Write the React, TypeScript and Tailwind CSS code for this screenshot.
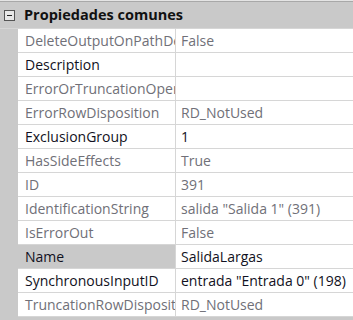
import React from 'react';

type Prop = { name: string; value: string; editable?: boolean; selected?: boolean };

const props: Prop[] = [
  { name: 'DeleteOutputOnPathDetached', value: 'False' },
  { name: 'Description', value: '', editable: true },
  { name: 'ErrorOrTruncationOperation', value: '' },
  { name: 'ErrorRowDisposition', value: 'RD_NotUsed' },
  { name: 'ExclusionGroup', value: '1', editable: true },
  { name: 'HasSideEffects', value: 'True' },
  { name: 'ID', value: '391' },
  { name: 'IdentificationString', value: 'salida "Salida 1" (391)' },
  { name: 'IsErrorOut', value: 'False' },
  { name: 'Name', value: 'SalidaLargas', editable: true, selected: true },
  { name: 'SynchronousInputID', value: 'entrada "Entrada 0" (198)', editable: true },
  { name: 'TruncationRowDisposition', value: 'RD_NotUsed' },
];

export default function App() {
  return (
    <div
      className="w-[353px] h-[320px] overflow-hidden bg-[#c9c9c9] text-[14px] leading-none"
      style={{ fontFamily: '"Open Sans", "Noto Sans", sans-serif' }}
    >
      <div className="h-[1px] bg-[#e4e4e4]" />
      <div className="h-[1px] bg-[#a8a8a8]" />
      <div className="flex h-[27px] items-center border-b border-[#d6d6d6]">
        <div className="w-[18px] flex justify-center">
          <div className="w-[11px] h-[11px] border border-[#555] bg-[#e8e8e8] flex items-center justify-center">
            <div className="w-[5px] h-[1px] bg-[#222]" />
          </div>
        </div>
        <div className="pl-[6px] font-bold text-[14.5px] text-[#111] whitespace-nowrap">Propiedades comunes</div>
      </div>
      {props.map((p) => (
        <div key={p.name} className="flex h-[24px]">
          <div className="w-[18px] shrink-0" />
          <div
            className={`w-[158px] shrink-0 border-r border-b border-[#d6d6d6] overflow-hidden whitespace-nowrap flex items-center pl-[7px] ${
              p.selected ? 'bg-[#c9c9c9]' : 'bg-white'
            } ${p.editable ? 'text-[#111122]' : 'text-[#707078]'}`}
          >
            {p.name}
          </div>
          <div
            className={`flex-1 bg-white border-b border-[#d6d6d6] overflow-hidden whitespace-nowrap flex items-center pl-[5px] ${
              p.editable ? 'text-[#111122]' : 'text-[#707078]'
            }`}
          >
            {p.value}
          </div>
        </div>
      ))}
    </div>
  );
}
